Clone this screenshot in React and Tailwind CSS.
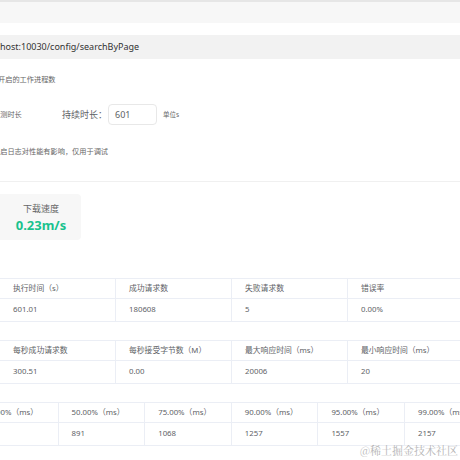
const font = { fontFamily: '"Noto Sans", "Noto Sans CJK SC", sans-serif' }

function StatTable({ cols, rows, width, offset, className }) {
  return (
    <div className={`flex border-y border-[#ebeef5] text-[7.8px] text-[#606266] ${className}`} style={{ marginLeft: offset }}>
      {cols.map((c, i) => (
        <div key={i} className="shrink-0 border-r border-[#ebeef5]" style={{ width }}>
          <div className="flex h-[20px] items-center border-b border-[#ebeef5] pl-[13px] whitespace-nowrap">{c}</div>
          <div className="flex h-[22px] items-center pl-[13px] whitespace-nowrap">{rows[i]}</div>
        </div>
      ))}
    </div>
  )
}

export default function App() {
  return (
    <div className="relative h-[460px] w-[460px] overflow-hidden bg-white" style={font}>
      <div className="h-[23px] border-t-2 border-[#e6e6e6] bg-[#f7f7f7]" />
      <div className="mt-[12px] flex h-[24px] items-center bg-[#f2f2f2] text-[9px] text-[#333]">
        <span className="whitespace-nowrap">host:10030/config/searchByPage</span>
      </div>
      <div className="mt-[15px] ml-[-2px] text-[7.2px] leading-[10px] text-[#666] whitespace-nowrap">开启的工作进程数</div>
      <div className="mt-[20px] flex h-[21px] items-center whitespace-nowrap">
        <span className="ml-[-7px] w-[69px] text-[7.2px] text-[#666]">压测时长</span>
        <span className="w-[46px] text-[9px] text-[#606266]">持续时长：</span>
        <div className="flex h-[21px] w-[49px] items-center rounded border border-[#e8e8e8] pl-[6px] text-[9px] text-[#606266]">601</div>
        <span className="ml-[6px] text-[6.5px] text-[#666]">单位s</span>
      </div>
      <div className="mt-[21px] ml-[-7px] text-[7.2px] leading-[10px] text-[#666] whitespace-nowrap">开启日志对性能有影响，仅用于调试</div>
      <div className="mt-[25px] h-px bg-[#f0f0f0]" />
      <div className="mt-[12px] flex h-[46px] w-[81px] flex-col items-center justify-center rounded-r bg-[#f7f7f7] pl-[1px] pt-[2px]">
        <div className="text-[9px] leading-[14px] text-[#666]">下载速度</div>
        <div className="text-[13px] font-bold leading-[18px] text-[#19c28e]">0.23m/s</div>
      </div>
      <StatTable
        className="mt-[38px]"
        offset={0}
        width={116}
        cols={['执行时间（s）', '成功请求数', '失败请求数', '错误率']}
        rows={['601.01', '180608', '5', '0.00%']}
      />
      <StatTable
        className="mt-[18px]"
        offset={0}
        width={116}
        cols={['每秒成功请求数', '每秒接受字节数（M）', '最大响应时间（ms）', '最小响应时间（ms）']}
        rows={['300.51', '0.00', '20006', '20']}
      />
      <StatTable
        className="mt-[18px]"
        offset={-28}
        width={86.6}
        cols={['10.00%（ms）', '50.00%（ms）', '75.00%（ms）', '90.00%（ms）', '95.00%（ms）', '99.00%（ms）']}
        rows={['', '891', '1068', '1257', '1557', '2157']}
      />
      <div
        className="absolute right-[2px] top-[442px] text-[11px] text-[#b5b5b5]"
        style={{ fontFamily: '"Noto Serif CJK SC", "Noto Sans CJK SC", serif', textShadow: '0 0 2px #fff' }}
      >
        @稀土掘金技术社区
      </div>
    </div>
  )
}
